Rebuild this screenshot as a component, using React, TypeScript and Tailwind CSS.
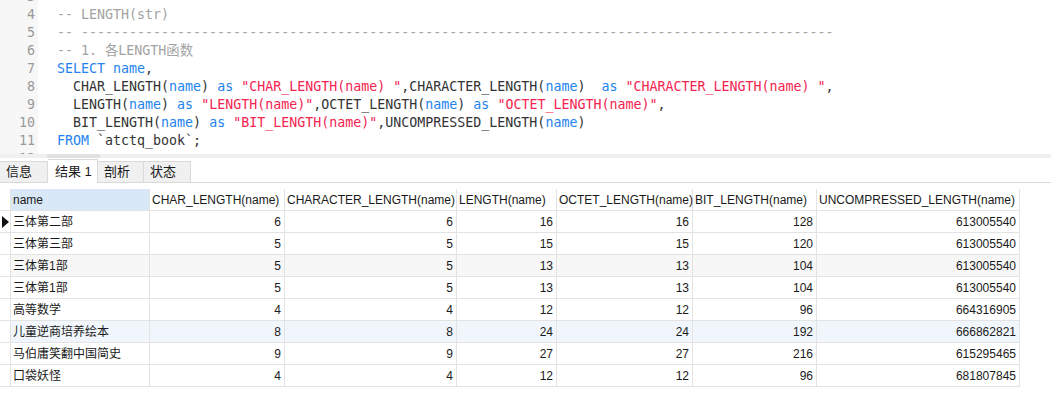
import React from 'react';

type Tok = [string, string];

const C = 'text-[#333333]';
const K = 'text-[#2483ee]';
const S = 'text-[#f4234f]';
const G = 'text-[#a3a3a3]';

const codeLines: { n: number; toks: Tok[] }[] = [
  { n: 3, toks: [] },
  { n: 4, toks: [['-- LENGTH(str)', G]] },
  { n: 5, toks: [['-- ' + '-'.repeat(94), G]] },
  { n: 6, toks: [['-- 1. 各LENGTH函数', G]] },
  { n: 7, toks: [['SELECT name', K], [',', C]] },
  {
    n: 8,
    toks: [
      ['  CHAR_LENGTH(', C], ['name', K], [')', C], [' as ', K], ['"CHAR_LENGTH(name) "', S], [',CHARACTER_LENGTH(', C],
      ['name', K], [')', C], ['  as ', K], ['"CHARACTER_LENGTH(name) "', S], [',', C],
    ],
  },
  {
    n: 9,
    toks: [
      ['  LENGTH(', C], ['name', K], [')', C], [' as ', K], ['"LENGTH(name)"', S], [',OCTET_LENGTH(', C],
      ['name', K], [')', C], [' as ', K], ['"OCTET_LENGTH(name)"', S], [',', C],
    ],
  },
  {
    n: 10,
    toks: [
      ['  BIT_LENGTH(', C], ['name', K], [')', C], [' as ', K], ['"BIT_LENGTH(name)"', S], [',UNCOMPRESSED_LENGTH(', C],
      ['name', K], [')', C],
    ],
  },
  { n: 11, toks: [['FROM ', K], ['`atctq_book`;', C]] },
  { n: 12, toks: [] },
];

const headers = [
  'name',
  'CHAR_LENGTH(name)',
  'CHARACTER_LENGTH(name)',
  'LENGTH(name)',
  'OCTET_LENGTH(name)',
  'BIT_LENGTH(name)',
  'UNCOMPRESSED_LENGTH(name)',
];

const rows: (string | number)[][] = [
  ['三体第二部', 6, 6, 16, 16, 128, 613005540],
  ['三体第三部', 5, 5, 15, 15, 120, 613005540],
  ['三体第1部', 5, 5, 13, 13, 104, 613005540],
  ['三体第1部', 5, 5, 13, 13, 104, 613005540],
  ['高等数学', 4, 4, 12, 12, 96, 664316905],
  ['儿童逆商培养绘本', 8, 8, 24, 24, 192, 666862821],
  ['马伯庸笑翻中国简史', 9, 9, 27, 27, 216, 615295465],
  ['口袋妖怪', 4, 4, 12, 12, 96, 681807845],
];

const rowBg = ['bg-white', 'bg-white', 'bg-[#f7f7f7]', 'bg-white', 'bg-white', 'bg-[#f1f6fc]', 'bg-white', 'bg-white'];

const tabs = [
  { label: '信息', w: 'w-[48px]', active: false },
  { label: '结果 1', w: 'w-[50px]', active: true },
  { label: '剖析', w: 'w-[46px]', active: false },
  { label: '状态', w: 'w-[47px]', active: false },
];

export default function App() {
  return (
    <div className="w-[1051px] h-[404px] overflow-hidden bg-white font-['Liberation_Sans','Noto_Sans_CJK_SC',sans-serif]">
      {/* editor */}
      <div className="h-[154px] overflow-hidden flex font-['DejaVu_Sans_Mono','Noto_Sans_CJK_SC',monospace] text-[13.3px] leading-[18px]">
        <div className="w-[38px] shrink-0 bg-[#f7f7f7]">
          <div className="-mt-[12px]">
            {codeLines.map(l => (
              <div key={l.n} className="h-[18px] text-right pr-[3px] text-[#999999]">{l.n}</div>
            ))}
          </div>
        </div>
        <div className="flex-1 pl-[19px]">
          <div className="-mt-[12px]">
            {codeLines.map(l => (
              <div key={l.n} className="h-[18px] whitespace-pre">
                {l.toks.map((t, i) => (
                  <span key={i} className={t[1]}>{t[0]}</span>
                ))}
              </div>
            ))}
          </div>
        </div>
      </div>

      {/* scrollbar strip */}
      <div className="h-[4px] bg-[#f0f0f0] pl-[47px]">
        <div className="w-[53px] h-full bg-[#e2e2e2]" />
      </div>

      {/* tabs */}
      <div className="h-[25px] flex items-end border-b border-[#d9d9d9] text-[13px] text-[#1a1a1a]">
        {tabs.map(t => (
          <div
            key={t.label}
            className={
              t.active
                ? `${t.w} h-[24px] -mb-px bg-white border-t border-r border-[#d9d9d9] flex items-center pl-[7px]`
                : `${t.w} h-[21px] bg-[#f0f0f0] border-t border-r border-[#d9d9d9] flex items-center pl-[6px]`
            }
          >
            {t.label}
          </div>
        ))}
      </div>

      {/* result grid */}
      <div className="pt-[6px] text-[12px] text-[#1a1a1a]">
        <div className="grid grid-cols-[11px_139px_135px_172px_100px_136px_124px_203px] auto-rows-[22px]">
          <div className="border-r border-b border-[#e3e3e3]" />
          {headers.map((h, i) => (
            <div
              key={h}
              className={`border-r border-b border-[#e3e3e3] flex items-center pl-[2px] whitespace-nowrap ${i === 0 ? 'bg-[#d9e8f6]' : 'bg-white'}`}
            >
              {h}
            </div>
          ))}
          {rows.map((r, ri) => (
            <React.Fragment key={ri}>
              <div className="border-r border-b border-[#e3e3e3] flex items-center justify-center">
                {ri === 0 && (
                  <svg width="7" height="12" viewBox="0 0 7 12">
                    <polygon points="0,0 7,6 0,12" fill="#111111" />
                  </svg>
                )}
              </div>
              {r.map((v, ci) => (
                <div
                  key={ci}
                  className={`border-r border-b border-[#e3e3e3] flex items-center whitespace-nowrap ${rowBg[ri]} ${ci === 0 ? 'pl-[2px]' : 'justify-end pr-[3px]'}`}
                >
                  {v}
                </div>
              ))}
            </React.Fragment>
          ))}
        </div>
      </div>
    </div>
  );
}
